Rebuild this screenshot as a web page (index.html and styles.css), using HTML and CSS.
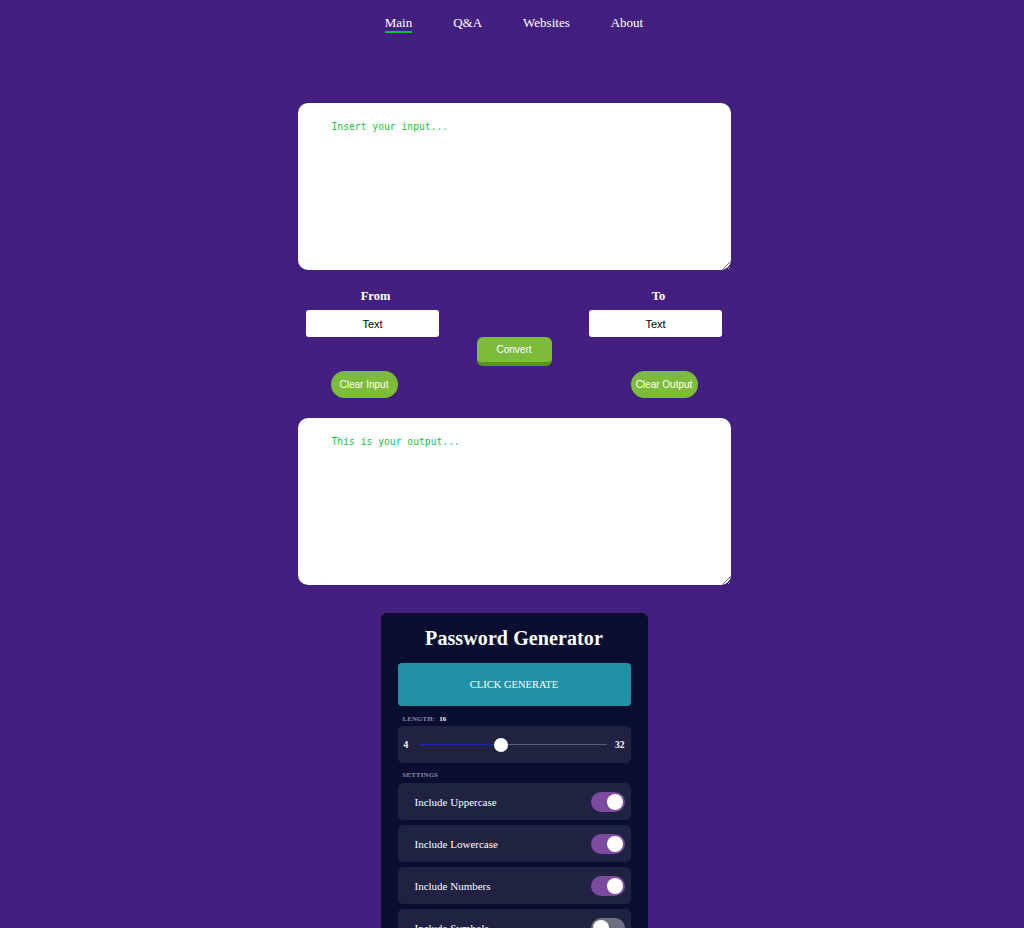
FILE: index.html
```html
<!DOCTYPE html>
<html lang="en">
<head>
<meta charset="utf-8">
<title>Converter</title>
<link rel="stylesheet" href="styles.css">
</head>
<body>
<nav class="nav">
  <a class="nav-link active" href="#">Main</a>
  <a class="nav-link" href="#">Q&amp;A</a>
  <a class="nav-link" href="#">Websites</a>
  <a class="nav-link" href="#">About</a>
</nav>
<main class="main">
  <textarea class="box" placeholder="Insert your input..."></textarea>
  <section class="controls">
    <div class="fields">
      <div class="field">
        <label class="field-label">From</label>
        <input class="field-input" type="text" value="Text">
      </div>
      <div class="field">
        <label class="field-label">To</label>
        <input class="field-input" type="text" value="Text">
      </div>
    </div>
    <div class="convert-row"><button class="convert">Convert</button></div>
    <div class="clear-row">
      <button class="clear">Clear Input</button>
      <button class="clear">Clear Output</button>
    </div>
  </section>
  <textarea class="box box-out" placeholder="This is your output..."></textarea>
</main>
<section class="card">
  <h2 class="card-title">Password Generator</h2>
  <button class="generate">CLICK GENERATE</button>
  <div class="small-label">LENGTH: <span class="len-val">16</span></div>
  <div class="panel slider-panel">
    <span class="lim">4</span>
    <input class="range" type="range" min="4" max="32" value="16">
    <span class="lim">32</span>
  </div>
  <div class="small-label settings-label">SETTINGS</div>
  <div class="settings">
    <div class="panel setting"><span>Include Uppercase</span><span class="toggle on"></span></div>
    <div class="panel setting"><span>Include Lowercase</span><span class="toggle on"></span></div>
    <div class="panel setting"><span>Include Numbers</span><span class="toggle on"></span></div>
    <div class="panel setting"><span>Include Symbols</span><span class="toggle"></span></div>
  </div>
</section>
</body>
</html>
```
FILE: styles.css
```css
* { box-sizing: border-box; }
body {
  margin: 0;
  padding-left: 4px;
  background: #43207f;
  font-family: "Liberation Serif", "Times New Roman", serif;
  color: #fff;
  min-height: 928px;
}
.nav {
  display: flex;
  justify-content: center;
  gap: 41px;
  padding-top: 15px;
}
.nav-link {
  color: #fff;
  text-decoration: none;
  font-size: 13px;
  line-height: 16px;
  border-bottom: 2px solid transparent;
}
.nav-link.active { border-bottom-color: #0fbf3a; }
.main {
  width: 433px;
  margin: 70px auto 0;
}
.box {
  display: block;
  width: 433px;
  height: 167px;
  border: none;
  border-radius: 10px;
  padding: 18px 34px;
  background: #fff;
  font-family: "DejaVu Sans Mono", "Liberation Mono", monospace;
  font-size: 9.7px;
  outline: none;
}
.box::placeholder { color: #13c444; opacity: 1; }
.controls { padding-top: 18px; }
.fields {
  display: flex;
  justify-content: space-between;
  padding: 0 8px;
}
.field {
  display: flex;
  flex-direction: column;
  align-items: center;
  width: 134px;
}
.field-label {
  font-weight: bold;
  font-size: 12.5px;
  line-height: 16px;
  margin-bottom: 6px;
  padding-left: 6px;
}
.field-input {
  width: 133px;
  height: 27px;
  border: none;
  border-radius: 3px;
  text-align: center;
  font-family: "Liberation Sans", Arial, sans-serif;
  font-size: 11px;
  color: #000;
  background: #fff;
}
.convert-row { display: flex; justify-content: center; }
.convert {
  width: 75px;
  height: 29px;
  border: none;
  border-bottom: 4px solid #5a9224;
  border-radius: 6px;
  background: #7dbb3a;
  color: #fff;
  font-family: "Liberation Sans", Arial, sans-serif;
  font-size: 10px;
  padding: 0;
}
.clear-row {
  display: flex;
  justify-content: space-between;
  padding: 0 33px;
  margin-top: 5px;
}
.clear {
  width: 67px;
  height: 27px;
  border: none;
  border-radius: 14px;
  background: #7dbb3a;
  color: #fff;
  font-family: "Liberation Sans", Arial, sans-serif;
  font-size: 10px;
  padding: 0;
}
.box-out { margin-top: 20px; }
.card {
  width: 267px;
  margin: 28px auto 0;
  background: #0a0f31;
  border-radius: 6px;
  padding: 13px 17px 20px;
}
.card-title {
  margin: 0;
  text-align: center;
  font-size: 20px;
  line-height: 24px;
  font-weight: bold;
  letter-spacing: 0.1px;
}
.generate {
  display: block;
  width: 100%;
  height: 43px;
  margin-top: 13px;
  border: none;
  border-radius: 4px;
  background: #2191a5;
  color: #fff;
  font-family: "Liberation Serif", "Times New Roman", serif;
  font-size: 10.5px;
}
.small-label {
  margin-top: 8px;
  padding-left: 5px;
  font-size: 6.8px;
  line-height: 10px;
  font-weight: bold;
  color: #8a8fa6;
  letter-spacing: 0.2px;
}
.len-val { color: #fff; margin-left: 2px; }
.panel {
  background: #1f2241;
  border-radius: 5px;
}
.slider-panel {
  margin-top: 2px;
  height: 37px;
  display: flex;
  align-items: center;
  padding: 0 6px;
}
.lim {
  font-size: 9.5px;
  font-weight: bold;
  color: #fff;
}
.range {
  -webkit-appearance: none;
  appearance: none;
  flex: 1;
  margin: 0 8px 0 12px;
  height: 14px;
  background: transparent;
}
.range::-webkit-slider-runnable-track {
  height: 1px;
  background: linear-gradient(to right, #1b25c9 0 44%, #575b74 44% 100%);
}
.range::-webkit-slider-thumb {
  -webkit-appearance: none;
  width: 14px;
  height: 14px;
  border-radius: 50%;
  background: #fff;
  margin-top: -6.5px;
  border: none;
}
.settings-label { margin-top: 7px; }
.settings {
  margin-top: 3px;
  display: flex;
  flex-direction: column;
  gap: 5px;
}
.setting {
  height: 37px;
  display: flex;
  align-items: center;
  justify-content: space-between;
  padding: 0 6px 0 17px;
  font-size: 11px;
  line-height: 14px;
}
.toggle {
  position: relative;
  width: 34px;
  height: 20px;
  border-radius: 10px;
  background: #6c7080;
}
.toggle::after {
  content: "";
  position: absolute;
  top: 2px;
  left: 2px;
  width: 16px;
  height: 16px;
  border-radius: 50%;
  background: #fff;
}
.toggle.on { background: #7b4aa1; }
.toggle.on::after { left: 16px; }
```
